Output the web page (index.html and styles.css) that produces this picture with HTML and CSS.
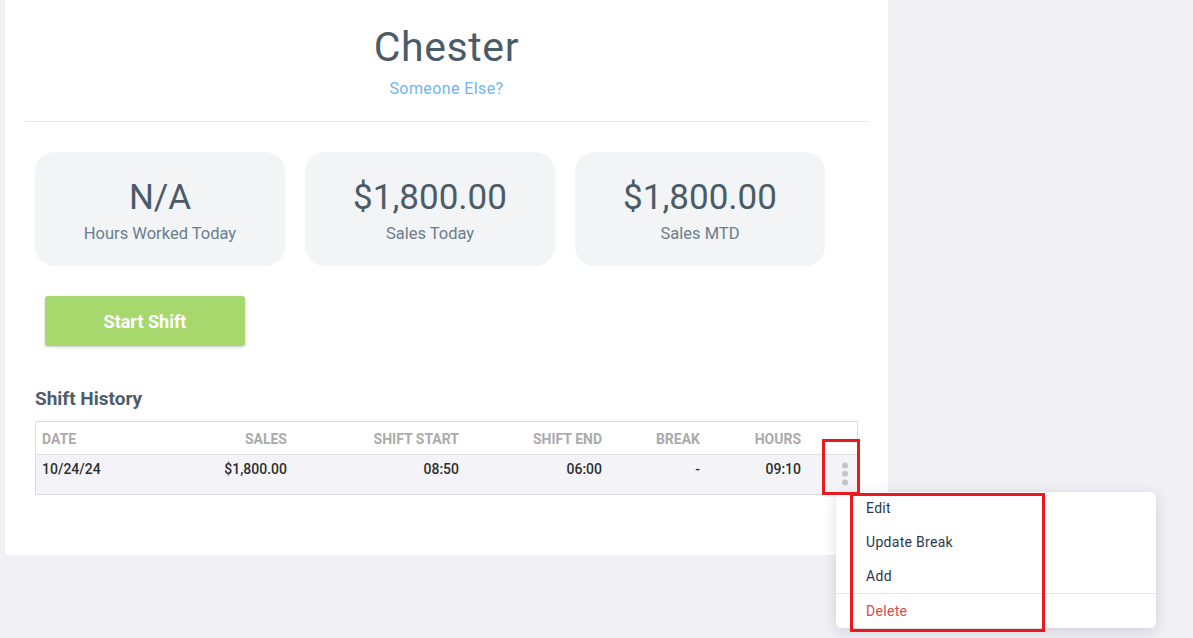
FILE: index.html
```html
<!DOCTYPE html>
<html lang="en">
<head>
<meta charset="utf-8">
<title>Chester – Shifts</title>
<link rel="stylesheet" href="styles.css">
</head>
<body>
  <div class="page">
    <main class="panel">
      <header class="profile">
        <h1 class="profile-name">Chester</h1>
        <a class="profile-switch" href="#">Someone Else?</a>
      </header>

      <section class="stats">
        <div class="stat-card">
          <div class="stat-value">N/A</div>
          <div class="stat-label">Hours Worked Today</div>
        </div>
        <div class="stat-card">
          <div class="stat-value">$1,800.00</div>
          <div class="stat-label">Sales Today</div>
        </div>
        <div class="stat-card">
          <div class="stat-value">$1,800.00</div>
          <div class="stat-label">Sales MTD</div>
        </div>
      </section>

      <div class="actions">
        <button class="btn-start" type="button">Start Shift</button>
      </div>

      <section class="history">
        <h2 class="history-title">Shift History</h2>
        <div class="table-wrap">
          <table class="shift-table">
            <colgroup>
              <col class="c-date"><col class="c-sales"><col class="c-start"><col class="c-end"><col class="c-break"><col class="c-hours"><col class="c-menu">
            </colgroup>
            <thead>
              <tr>
                <th class="left">Date</th>
                <th>Sales</th>
                <th>Shift Start</th>
                <th>Shift End</th>
                <th>Break</th>
                <th>Hours</th>
                <th></th>
              </tr>
            </thead>
            <tbody>
              <tr>
                <td class="left">10/24/24</td>
                <td>$1,800.00</td>
                <td>08:50</td>
                <td>06:00</td>
                <td>-</td>
                <td>09:10</td>
                <td class="menu-cell">
                  <span class="kebab" aria-label="More actions">
                    <svg width="8" height="24" viewBox="0 0 8 24"><circle cx="4" cy="3.5" r="3" fill="#c6c6c6"/><circle cx="4" cy="11.8" r="3" fill="#c6c6c6"/><circle cx="4" cy="20.6" r="3" fill="#c6c6c6"/></svg>
                  </span>
                </td>
              </tr>
            </tbody>
          </table>
        </div>
      </section>
    </main>
  </div>

  <ul class="row-menu">
    <li class="menu-item">Edit</li>
    <li class="menu-item">Update Break</li>
    <li class="menu-item">Add</li>
    <li class="menu-item menu-danger">Delete</li>
  </ul>

  <div class="annot annot-kebab"></div>
  <div class="annot annot-menu"></div>
</body>
</html>
```
FILE: styles.css
```css
* { box-sizing: border-box; }

html, body {
  margin: 0;
  padding: 0;
}

body {
  background: #f0f0f5;
  font-family: Roboto, "Liberation Sans", Arial, sans-serif;
  color: #4b5b68;
  width: 1193px;
  height: 638px;
  overflow: hidden;
  position: relative;
}

.page {
  display: flex;
  padding-left: 5px;
}

.panel {
  width: 883px;
  height: 555px;
  background: #ffffff;
  padding: 0 20px;
}

/* Profile header */
.profile {
  display: flex;
  flex-direction: column;
  align-items: center;
  padding: 25px 0 22px;
  border-bottom: 1px solid #e6e6e9;
}

.profile-name {
  margin: 0;
  font-size: 41px;
  line-height: 44px;
  font-weight: 400;
  color: #4b5b68;
  letter-spacing: 0.6px;
}

.profile-switch {
  margin-top: 10px;
  font-size: 16px;
  line-height: 20px;
  color: #6db5f6;
  text-decoration: none;
  letter-spacing: 0.4px;
}

/* Stat cards */
.stats {
  display: flex;
  gap: 20px;
  padding: 0 10px;
  margin-top: 30px;
}

.stat-card {
  width: 250px;
  height: 114px;
  background: #f3f4f6;
  border-radius: 20px;
  display: flex;
  flex-direction: column;
  align-items: center;
  padding-top: 25px;
}

.stat-value {
  font-size: 35px;
  line-height: 42px;
  color: #4b5b68;
}

.stat-label {
  margin-top: 5px;
  font-size: 16.5px;
  line-height: 20px;
  color: #6a7e8c;
}

/* Start shift */
.actions {
  display: flex;
  padding-left: 20px;
  margin-top: 30px;
}

.btn-start {
  width: 200px;
  height: 50px;
  border: 0;
  border-radius: 3px;
  background: #a7d86d;
  color: #ffffff;
  font-family: inherit;
  font-size: 18px;
  font-weight: 700;
  box-shadow: 0 1px 3px rgba(0, 0, 0, 0.22);
  cursor: pointer;
}

/* Shift history */
.history {
  padding: 0 10px;
  margin-top: 42px;
}

.history-title {
  margin: 0 0 11px;
  font-size: 19px;
  line-height: 22px;
  font-weight: 700;
  color: #4d5d6a;
}

.table-wrap {
  border: 1px solid #dcdcdc;
}

.shift-table {
  width: 100%;
  table-layout: fixed;
  border-collapse: collapse;
  font-size: 14px;
  line-height: 16px;
}

.c-date { width: 127px; }
.c-sales { width: 130px; }
.c-start { width: 172px; }
.c-end { width: 143px; }
.c-break { width: 98px; }
.c-hours { width: 101px; }
.c-menu { width: 50px; }

.shift-table th {
  padding: 9px 6px 7px;
  text-align: right;
  font-weight: 700;
  color: #ababab;
  text-transform: uppercase;
  border-bottom: 1px solid #e0e0e0;
}

.shift-table td {
  padding: 6px 6px 0;
  text-align: right;
  vertical-align: top;
  font-weight: 500;
  color: #2e2e2e;
  background: #f4f4f8;
}

.shift-table .left { text-align: left; }

.shift-table td.menu-cell {
  padding: 7px 8px 8px 0;
}

.kebab {
  display: block;
  width: 8px;
  height: 24px;
  margin-left: auto;
}

.kebab svg { display: block; }

/* Row action menu (overlay) */
.row-menu {
  position: absolute;
  left: 836px;
  top: 492px;
  width: 320px;
  margin: 0;
  padding: 0;
  list-style: none;
  background: #ffffff;
  border-radius: 5px;
  box-shadow: 0 3px 14px rgba(40, 45, 70, 0.16);
}

.menu-item {
  padding: 7px 30px;
  font-size: 14px;
  line-height: 20px;
  color: #2d3748;
  letter-spacing: 0.3px;
}

.menu-item:first-child {
  padding-top: 6px;
  padding-bottom: 7px;
}

.menu-danger {
  border-top: 1px solid #e2e8f0;
  padding-top: 7px;
  padding-bottom: 7px;
  color: #e04848;
}

/* Red annotation boxes */
.annot {
  position: absolute;
  border: 3px solid #e8191f;
  pointer-events: none;
}

.annot-kebab {
  left: 822px;
  top: 439px;
  width: 38px;
  height: 56px;
}

.annot-menu {
  left: 850px;
  top: 493px;
  width: 195px;
  height: 139px;
}
```
